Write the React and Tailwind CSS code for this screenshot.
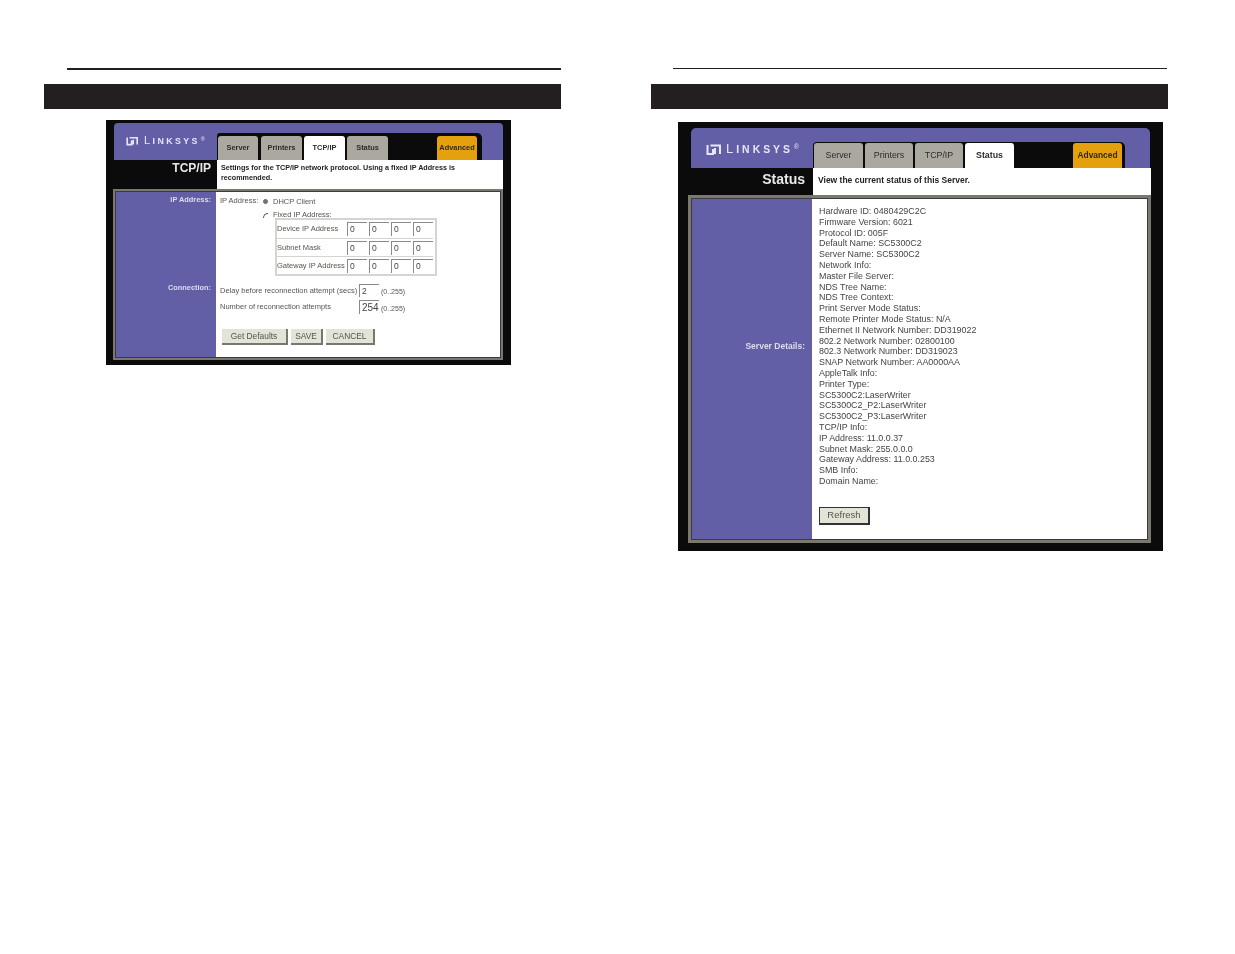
const statusLines = [
  "Hardware ID: 0480429C2C",
  "Firmware Version: 6021",
  "Protocol ID: 005F",
  "Default Name: SC5300C2",
  "Server Name: SC5300C2",
  "Network Info:",
  "Master File Server:",
  "NDS Tree Name:",
  "NDS Tree Context:",
  "Print Server Mode Status:",
  "Remote Printer Mode Status: N/A",
  "Ethernet II Network Number: DD319022",
  "802.2 Network Number: 02800100",
  "802.3 Network Number: DD319023",
  "SNAP Network Number: AA0000AA",
  "AppleTalk Info:",
  "Printer Type:",
  "SC5300C2:LaserWriter",
  "SC5300C2_P2:LaserWriter",
  "SC5300C2_P3:LaserWriter",
  "TCP/IP Info:",
  "IP Address: 11.0.0.37",
  "Subnet Mask: 255.0.0.0",
  "Gateway Address: 11.0.0.253",
  "SMB Info:",
  "Domain Name:",
];

function Logo({ className, glyphClass, textClass }) {
  return (
    <div className={`flex items-end text-[#e6e6f4] ${className}`}>
      <svg viewBox="0 0 15 11" className={`shrink-0 ${glyphClass}`} fill="none" stroke="currentColor" strokeWidth="2">
        <path d="M1.500 1v9h5.500V5M4.500 1.500h4M9 4V10M8.500 1.500h5.500V10" />
      </svg>
      <span className={`font-['Liberation_Sans',sans-serif] leading-none ${textClass}`}>
        L<span className="text-[0.8em] font-bold">INKSYS</span>
        <sup className="ml-[1px] text-[0.5em]">®</sup>
      </span>
    </div>
  );
}

function Tab({ label, className }) {
  return (
    <div className={`flex items-center justify-center rounded-t-[3px] font-['Liberation_Sans',sans-serif] text-[#2b2b27] ${className}`}>
      {label}
    </div>
  );
}

function MiniInput({ value = "0", className = "w-5 h-[14px]" }) {
  return (
    <div className={`flex items-center border-t border-l border-[#8a8a8a] bg-white pl-[2px] text-[8.5px] leading-none text-[#444] ${className}`}>
      {value}
    </div>
  );
}

function IpRow({ label }) {
  return (
    <div className="flex h-[18px] items-center border-t border-[#d5d5d0] first:border-t-0">
      <span className="w-[70px] text-[7.5px] whitespace-nowrap">{label}</span>
      <div className="flex gap-[2px]">
        <MiniInput />
        <MiniInput />
        <MiniInput />
        <MiniInput />
      </div>
    </div>
  );
}

function GrayButton({ label, className }) {
  return (
    <div className={`flex items-center justify-center border-r-2 border-b-2 border-[#77776e] bg-[#e4e3d8] text-[#55554f] ${className}`}>
      {label}
    </div>
  );
}

function TcpPanel() {
  return (
    <div className="ml-[62px] mt-[11px] h-[245px] w-[405px] bg-[#0c0b0c] px-2 pt-[3px] blur-[0.5px]">
      {/* header */}
      <div className="flex h-[37px] rounded-t-[4px] bg-[#635fa7]">
        <Logo className="ml-3 mt-[13px] h-[10px] w-[90px]" glyphClass="h-[10px] w-[12px]" textClass="ml-[6px] text-[11px] tracking-[2.400px]" />
        <div className="ml-[1px] mt-[10px] flex h-[27px] w-[265px] gap-[2px] rounded-tl-[3px] rounded-tr-[5px] bg-[#0c0b0c] pl-[1px] pt-[3px] text-[7.4px] font-bold">
          <Tab label="Server" className="mr-px w-10 bg-[#aaa89f]" />
          <Tab label="Printers" className="w-[41px] bg-[#aaa89f]" />
          <Tab label="TCP/IP" className="w-[41px] bg-white" />
          <Tab label="Status" className="w-[41px] bg-[#aaa89f]" />
          <Tab label="Advanced" className="ml-[47px] w-10 bg-[#e5a00d]" />
        </div>
      </div>
      {/* title row */}
      <div className="flex h-[29px]">
        <div className="w-[103px] pt-[1px] pr-[6px] text-right font-['Liberation_Sans',sans-serif] text-[12px] font-bold leading-[14px] text-[#e8e8e8]">
          TCP/IP
        </div>
        <div className="flex-1 bg-white pl-1 pr-10 pt-[3px] font-['Liberation_Sans',sans-serif] text-[7.2px] font-bold leading-[9.5px] text-[#222]">
          Settings for the TCP/IP network protocol. Using a fixed IP Address is recommended.
        </div>
      </div>
      {/* frame */}
      <div className="-ml-px h-[171px] border-2 border-[#7b796f] font-['Liberation_Sans',sans-serif]">
        <div className="flex h-full border border-[#3c3a40]">
          <div className="relative w-[100px] bg-[#635fa7] text-right text-[7.4px] font-bold text-[#dcdcec]">
            <div className="absolute right-[5px] top-[2px]">IP Address:</div>
            <div className="absolute right-[5px] top-[90px]">Connection:</div>
          </div>
          <div className="flex-1 bg-white pl-[4px] pt-[4px] text-[7.5px] leading-[8px] text-[#55554f]">
            <div className="flex items-center">
              <span className="w-[43px]">IP Address:</span>
              <span className="mr-[5px] size-[5px] rounded-full border border-[#666] bg-[#777]" />
              <span className="mt-[2px]">DHCP Client</span>
            </div>
            <div className="ml-[43px] mt-[5px] flex items-center">
              <span className="mr-[5px] size-[5px] rounded-tl-full border-t border-l border-[#555]" />
              <span>Fixed IP Address:</span>
            </div>
            <div className="ml-[55px] -mt-px w-[162px] border-2 border-[#d5d5d0] pr-[2px]">
              <IpRow label="Device IP Address" />
              <IpRow label="Subnet Mask" />
              <IpRow label="Gateway IP Address" />
            </div>
            <div className="mt-[8px] flex items-center">
              <span className="w-[139px] whitespace-nowrap">Delay before reconnection attempt (secs)</span>
              <MiniInput value="2" className="h-[13px] w-5" />
              <span className="ml-[2px] mt-[3px] text-[7px]">(0..255)</span>
            </div>
            <div className="mt-[3px] flex items-center">
              <span className="w-[139px] whitespace-nowrap">Number of reconnection attempts</span>
              <MiniInput value="254" className="h-[14px] w-5 text-[10px]" />
              <span className="ml-[2px] mt-[3px] text-[7px]">(0..255)</span>
            </div>
            <div className="ml-[2px] mt-[15px] flex gap-[3px] text-[8.4px]">
              <GrayButton label="Get Defaults" className="h-[16px] w-[66px]" />
              <GrayButton label="SAVE" className="h-[16px] w-[32px]" />
              <GrayButton label="CANCEL" className="h-[16px] w-[49px]" />
            </div>
          </div>
        </div>
      </div>
    </div>
  );
}

function StatusPanel() {
  return (
    <div className="ml-[27px] mt-[13px] h-[429px] w-[485px] bg-[#0c0b0c] px-[13px] pt-[6px] blur-[0.45px]">
      {/* header */}
      <div className="flex h-[40px] rounded-t-[5px] bg-[#635fa7]">
        <Logo className="ml-[15px] mt-[16px] h-[11px] w-[106px]" glyphClass="h-[11px] w-[15px]" textClass="ml-[5px] text-[13px] tracking-[3px]" />
        <div className="ml-[1px] mt-[14px] flex h-[26px] w-[312px] gap-[2px] rounded-tl-[4px] rounded-tr-[5px] bg-[#0c0b0c] pl-[1px] pt-[1px] text-[8.800px]">
          <Tab label="Server" className="w-[49px] bg-[#aaa89f]" />
          <Tab label="Printers" className="w-[48px] bg-[#aaa89f]" />
          <Tab label="TCP/IP" className="w-[48px] bg-[#aaa89f]" />
          <Tab label="Status" className="w-[49px] bg-white font-bold" />
          <Tab label="Advanced" className="ml-[57px] w-[49px] bg-[#e5a00d] text-[8.4px] font-bold" />
        </div>
      </div>
      {/* title row */}
      <div className="-mr-px flex h-[27px]">
        <div className="w-[122px] pt-[3px] pr-[8px] text-right font-['Liberation_Sans',sans-serif] text-[14px] font-bold leading-[16px] text-[#e8e8e8]">
          Status
        </div>
        <div className="flex-1 bg-white pl-[5px] pt-[5px] font-['Liberation_Sans',sans-serif] text-[8.500px] font-bold leading-[14px] text-[#222]">
          View the current status of this Server.
        </div>
      </div>
      {/* frame */}
      <div className="-ml-[3px] -mr-px h-[348px] border-[3px] border-[#7b796f] font-['Liberation_Sans',sans-serif]">
        <div className="flex h-full border border-[#3c3a40]">
          <div className="flex w-[120px] items-center justify-end bg-[#635fa7] pb-[46px] pr-[7px] text-[8.5px] font-bold text-[#dcdcec]">
            Server Details:
          </div>
          <div className="flex-1 bg-white pl-[7px] pt-[7px] text-[8.900px] leading-[10.8px] text-[#444]">
            {statusLines.map((line) => (
              <div key={line} className="h-[10.8px] whitespace-nowrap">
                {line}
              </div>
            ))}
            <div className="mt-[20px] flex h-[18px] w-[51px] items-center justify-center border border-r-2 border-b-2 border-[#333] bg-[#e4e3d8] text-[9.5px] text-[#55554f]">
              Refresh
            </div>
          </div>
        </div>
      </div>
    </div>
  );
}

export default function App() {
  return (
    <div className="flex h-[954px] w-[1235px] overflow-hidden bg-white">
      <div className="ml-[44px] w-[517px] pt-[68px]">
        <div className="ml-[23px] h-[2px] bg-[#231f20]" />
        <div className="mt-[14px] h-[25px] bg-[#231f20]" />
        <TcpPanel />
      </div>
      <div className="ml-[90px] w-[517px] pt-[68px]">
        <div className="ml-[22px] mr-px h-px bg-[#231f20]" />
        <div className="mt-[15px] h-[25px] bg-[#231f20]" />
        <StatusPanel />
      </div>
    </div>
  );
}
